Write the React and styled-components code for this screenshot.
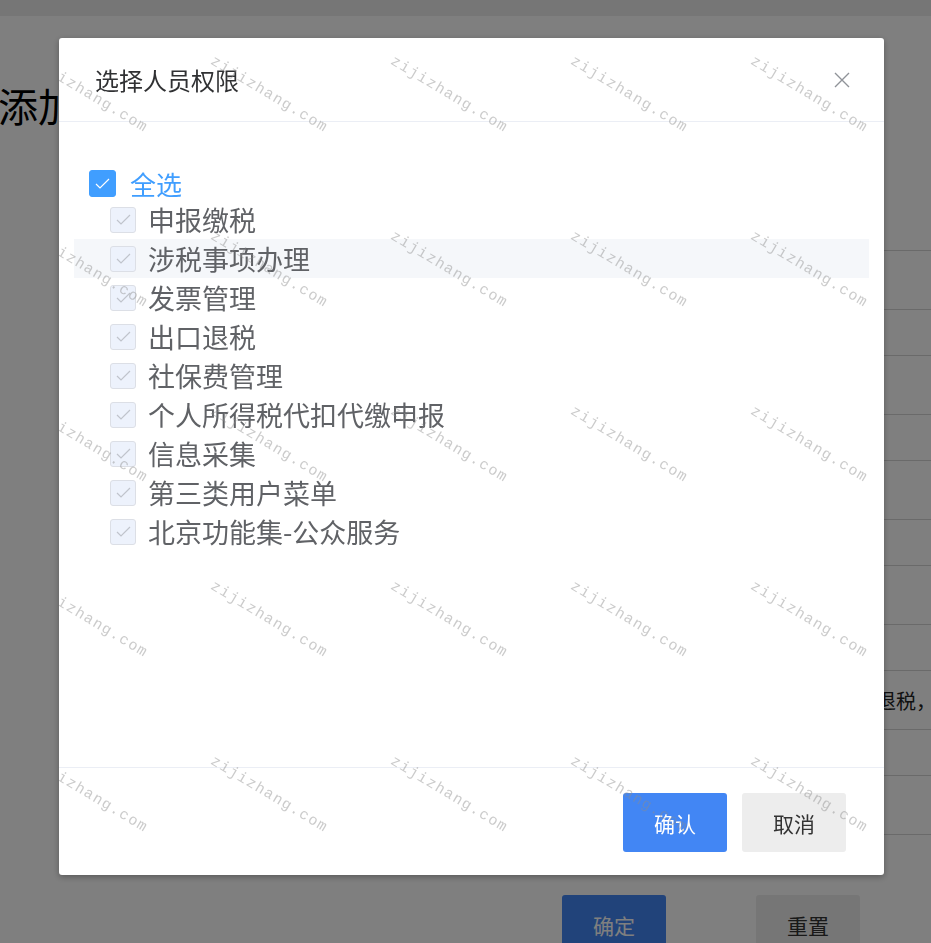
import React from 'react';
import styled, { createGlobalStyle } from 'styled-components';

const GlobalStyle = createGlobalStyle`
    html, body {
        margin: 0;
        padding: 0;
        overflow: hidden;
        background: #fff;
        font-family: "Noto Sans CJK SC", "Noto Sans", sans-serif;
    }
    * {
        box-sizing: border-box;
    }
`;

const Page = styled.div`
    position: relative;
    min-height: 100vh;
    background: #fff;
`;

const TopStrip = styled.div`
    height: 16px;
    background: #ececec;
`;

const PageTitle = styled.h1`
    margin: 65px 0 0 -2px;
    font-size: 40px;
    line-height: 48px;
    font-weight: 400;
    color: #000;
    white-space: nowrap;
`;

const Table = styled.div`
    margin: 121px 0 0 300px;
    border-bottom: 1px solid #d5d5d5;
    overflow: hidden;
`;

const Row = styled.div`
    display: flex;
    align-items: center;
    height: ${p => (p.$tall ? 59 : 46)}px;
    border-top: 1px solid #d5d5d5;
`;

const Label = styled.div`
    width: 536px;
    flex-shrink: 0;
`;

const Value = styled.div`
    font-size: 20px;
    color: #222;
    white-space: nowrap;
`;

const Actions = styled.div`
    display: flex;
    gap: 90px;
    margin-top: 60px;
    padding-left: 562px;
`;

const Button = styled.button`
    width: 104px;
    height: 59px;
    border: none;
    border-radius: 3px;
    font-family: inherit;
    font-size: 21px;
    background: ${p => (p.$primary ? '#4286f4' : '#ededed')};
    color: ${p => (p.$primary ? '#fff' : '#333')};
    cursor: pointer;
`;

const Overlay = styled.div`
    position: fixed;
    inset: 0;
    background: rgba(0, 0, 0, 0.5);
    padding: 38px 0 0 59px;
`;

const Dialog = styled.div`
    position: relative;
    width: 825px;
    height: 837px;
    background: #fff;
    border-radius: 3px;
    box-shadow: 0 2px 6px rgba(0, 0, 0, 0.3);
    display: flex;
    flex-direction: column;
    overflow: hidden;
`;

const Header = styled.div`
    height: 84px;
    flex-shrink: 0;
    display: flex;
    align-items: center;
    justify-content: space-between;
    padding: 0 34px 0 36px;
    border-bottom: 1px solid #ebeef5;
`;

const Title = styled.span`
    font-size: 24px;
    color: #303133;
`;

const Close = styled.button`
    display: flex;
    padding: 0;
    border: none;
    background: none;
    cursor: pointer;
`;

const Body = styled.div`
    flex: 1;
    padding: 45px 15px 0;
`;

const AllRow = styled.label`
    display: flex;
    align-items: center;
    gap: 14px;
    height: 33px;
    padding-left: 15px;
    font-size: 26px;
    color: #409eff;
`;

const Tree = styled.ul`
    margin: 0;
    padding: 0;
    list-style: none;
`;

const Node = styled.li`
    display: flex;
    align-items: center;
    gap: 12px;
    height: 39px;
    padding-left: 36px;
    font-size: 27px;
    color: #606266;
    background: ${p => (p.$hover ? '#f5f7fa' : 'transparent')};
`;

const Box = styled.span`
    display: flex;
    align-items: center;
    justify-content: center;
    width: ${p => (p.$disabled ? 26 : 27)}px;
    height: ${p => (p.$disabled ? 26 : 27)}px;
    flex-shrink: 0;
    border-radius: 3px;
    border: 1px solid ${p => (p.$disabled ? '#dcdfe6' : '#409eff')};
    background: ${p => (p.$disabled ? '#edf2fc' : '#409eff')};
`;

const Footer = styled.div`
    flex-shrink: 0;
    display: flex;
    justify-content: flex-end;
    gap: 15px;
    height: 108px;
    padding: 25px 38px 0 0;
    border-top: 1px solid #ebeef5;
`;

// repeating site stamp laid over the dialog
const Watermark = styled.div`
    position: absolute;
    inset: 0;
    overflow: hidden;
    pointer-events: none;
    z-index: 5;
`;

const MarkGrid = styled.div`
    display: grid;
    grid-template-columns: repeat(5, 180px);
    grid-auto-rows: 175px;
    margin: 15px 0 0 -23px;
`;

const Mark = styled.span`
    display: block;
    width: 160px;
    transform: rotate(31deg);
    transform-origin: 0 0;
    font-family: "Liberation Mono", monospace;
    font-size: 15px;
    letter-spacing: 1.3px;
    color: rgba(140, 140, 140, 0.45);
    white-space: nowrap;
`;

const Check = ({ disabled }) => (
    <Box $disabled={disabled}>
        <svg width="15" height="11" viewBox="0 0 15 11">
            <polyline
                points="1,6 5,10 14,1"
                fill="none"
                stroke={disabled ? '#c0c4cc' : '#fff'}
                strokeWidth="1.2"
            />
        </svg>
    </Box>
);

const items = [
    '申报缴税',
    '涉税事项办理',
    '发票管理',
    '出口退税',
    '社保费管理',
    '个人所得税代扣代缴申报',
    '信息采集',
    '第三类用户菜单',
    '北京功能集-公众服务',
];

const rowHeights = [59, 46, 59, 46, 59, 46, 59, 46, 59, 46, 59];

const App = () => {
    return (
        <Page>
            <GlobalStyle />
            <TopStrip />
            <PageTitle>添加人员</PageTitle>
            <Table>
                {rowHeights.map((h, i) => (
                    <Row key={i} $tall={h === 59}>
                        <Label />
                        {i === 8 && <Value>出口退税，社保费管理</Value>}
                    </Row>
                ))}
            </Table>
            <Actions>
                <Button $primary>确定</Button>
                <Button>重置</Button>
            </Actions>

            <Overlay>
                <Dialog>
                    <Header>
                        <Title>选择人员权限</Title>
                        <Close aria-label="close">
                            <svg width="16" height="16" viewBox="0 0 16 16">
                                <path d="M1 1L15 15M15 1L1 15" stroke="#909399" strokeWidth="1.4" />
                            </svg>
                        </Close>
                    </Header>
                    <Body>
                        <AllRow>
                            <Check />
                            全选
                        </AllRow>
                        <Tree>
                            {items.map((name, i) => (
                                <Node key={name} $hover={i === 1}>
                                    <Check disabled />
                                    {name}
                                </Node>
                            ))}
                        </Tree>
                    </Body>
                    <Footer>
                        <Button $primary>确认</Button>
                        <Button>取消</Button>
                    </Footer>
                    <Watermark>
                        <MarkGrid>
                            {Array.from({ length: 25 }).map((_, i) => (
                                <Mark key={i}>zijizhang.com</Mark>
                            ))}
                        </MarkGrid>
                    </Watermark>
                </Dialog>
            </Overlay>
        </Page>
    );
};

export default App;
